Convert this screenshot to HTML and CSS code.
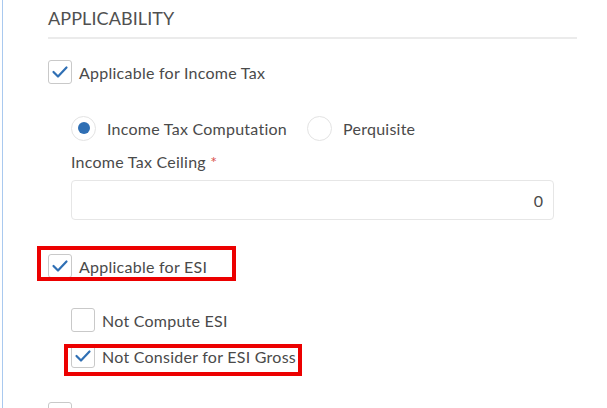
FILE: index.html
```html
<!DOCTYPE html>
<html lang="en">
<head>
<meta charset="utf-8">
<title>Applicability</title>
<link rel="stylesheet" href="styles.css">
</head>
<body>
<div class="page">
  <section class="panel">
    <h2 class="title">APPLICABILITY</h2>

    <div class="check row-first">
      <span class="box"><svg viewBox="0 0 24 24" width="24" height="24"><polyline points="5.5,12 10,16.5 18.5,7.5" /></svg></span>
      <span class="text">Applicable for Income Tax</span>
    </div>

    <div class="sub sub-tax">
      <div class="radios">
        <div class="radio">
          <span class="dot on"></span>
          <span class="text">Income Tax Computation</span>
        </div>
        <div class="radio">
          <span class="dot"></span>
          <span class="text">Perquisite</span>
        </div>
      </div>
      <div class="field">
        <div class="field-label">Income Tax Ceiling <span class="req">*</span></div>
        <div class="input">0</div>
      </div>
    </div>

    <div class="check row-esi">
      <span class="box"><svg viewBox="0 0 24 24" width="24" height="24"><polyline points="5.5,12 10,16.5 18.5,7.5" /></svg></span>
      <span class="text">Applicable for ESI</span>
      <span class="mark mark-esi"></span>
    </div>

    <div class="sub sub-esi">
      <div class="check">
        <span class="box"></span>
        <span class="text">Not Compute ESI</span>
      </div>
      <div class="check row-gross">
        <span class="box"><svg viewBox="0 0 24 24" width="24" height="24"><polyline points="5.5,12 10,16.5 18.5,7.5" /></svg></span>
        <span class="text">Not Consider for ESI Gross</span>
        <span class="mark mark-gross"></span>
      </div>
    </div>

    <div class="check row-last">
      <span class="box"></span>
    </div>
  </section>
</div>
</body>
</html>
```

FILE: styles.css
```css
html, body {
  margin: 0;
  padding: 0;
  background: #ffffff;
  height: 100%;
  overflow: hidden;
}

.page {
  font-family: Lato, "Open Sans", sans-serif;
  color: #4a4a4a;
  height: 408px;
  overflow: hidden;
}

.panel {
  margin-left: 2px;
  border-left: 1px solid #a9c9ef;
  padding: 6px 30px 0 45px;
  min-height: 420px;
}

.title {
  margin: 0;
  font-size: 18px;
  line-height: 24px;
  font-weight: 400;
  color: #505050;
  letter-spacing: 0.1px;
  padding-bottom: 7px;
  border-bottom: 2px solid #ebebeb;
}

.check {
  position: relative;
  display: flex;
  align-items: center;
  gap: 7px;
  height: 24px;
  font-size: 16px;
  letter-spacing: 0.25px;
}

.box {
  flex: none;
  width: 24px;
  height: 24px;
  box-sizing: border-box;
  border: 1px solid #c9c9c9;
  border-radius: 3px;
  background: #fff;
  position: relative;
}

.box svg {
  position: absolute;
  left: -1px;
  top: -1px;
  fill: none;
  stroke: #2f6fb4;
  stroke-width: 2.2;
  stroke-linecap: round;
  stroke-linejoin: round;
}

.row-first { margin-top: 21px; }

.sub {
  padding-left: 23px;
  padding-right: 23px;
}

.sub-tax { margin-top: 32px; }

.radios {
  display: flex;
  align-items: center;
  gap: 20px;
  height: 24px;
}

.radio {
  display: flex;
  align-items: center;
  gap: 11px;
  font-size: 16px;
  letter-spacing: 0.25px;
}

.dot {
  flex: none;
  width: 25px;
  height: 25px;
  box-sizing: border-box;
  border: 1px solid #e3e3e3;
  border-radius: 50%;
  display: flex;
  align-items: center;
  justify-content: center;
}

.dot.on::after {
  content: "";
  width: 12px;
  height: 12px;
  border-radius: 50%;
  background: #2f6fb4;
}

.field { margin-top: 12px; }

.field-label {
  font-size: 16px;
  line-height: 20px;
  letter-spacing: 0.25px;
}

.req { color: #d9534f; }

.input {
  margin-top: 8px;
  height: 40px;
  box-sizing: border-box;
  border: 1px solid #e6e6e6;
  border-radius: 4px;
  display: flex;
  align-items: center;
  justify-content: flex-end;
  padding-right: 10px;
  font-size: 16px;
}

.row-esi { margin-top: 34px; }

.sub-esi .check:first-child { margin-top: 30px; }
.row-gross { margin-top: 12px; }

.row-last { margin-top: 34px; }

.mark {
  position: absolute;
  box-sizing: border-box;
  border: 4px solid #ec0000;
  pointer-events: none;
}

.mark-esi {
  left: -11px;
  top: -8px;
  width: 199px;
  height: 35px;
}

.mark-gross {
  left: -7px;
  top: 0;
  width: 238px;
  height: 32px;
}
```
